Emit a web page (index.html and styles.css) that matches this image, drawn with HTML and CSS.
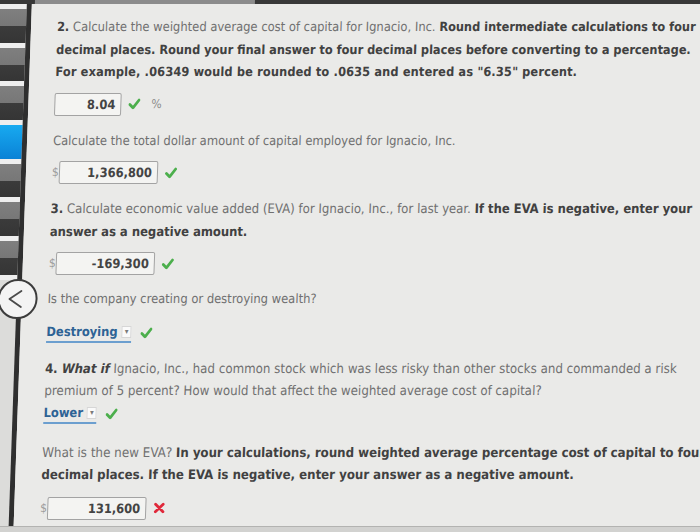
FILE: index.html
```html
<!DOCTYPE html>
<html lang="en">
<head>
<meta charset="utf-8">
<title>EVA question</title>
<link rel="stylesheet" href="styles.css">
</head>
<body>
<div class="screen">
  <div class="topbar"><span class="tab"></span></div>
  <div class="main">
    <aside class="rail">
      <div class="tile"></div>
      <div class="tile"></div>
      <div class="tile"></div>
      <div class="tile blue"></div>
      <div class="tile"></div>
      <div class="tile"></div>
      <div class="tile"></div>
      <div class="tile-end"></div>
    </aside>
    <div class="divider"></div>
    <section class="panel">
      <p class="q first"><b>2.</b> Calculate the weighted average cost of capital for Ignacio, Inc. <b>Round intermediate calculations to four<br>decimal places. Round your final answer to four decimal places before converting to a percentage.<br><span class="wide">For example, .06349 would be rounded to .0635 and entered as "6.35" percent.</span></b></p>
      <div class="answer">
        <span class="field w-pct">8.04</span>
        <svg class="mark" viewBox="0 0 12 12"><path class="check" d="M1.5 6.6 L4.7 9.8 L10.6 2"/></svg>
        <span class="unit">%</span>
      </div>

      <p class="q">Calculate the total dollar amount of capital employed for Ignacio, Inc.</p>
      <div class="answer">
        <span class="cur">$</span><span class="field w-amt">1,366,800</span>
        <svg class="mark" viewBox="0 0 12 12"><path class="check" d="M1.5 6.6 L4.7 9.8 L10.6 2"/></svg>
      </div>

      <p class="q q-eva"><b>3.</b> Calculate economic value added (EVA) for Ignacio, Inc., for last year. <b>If the EVA is negative, enter your<br>answer as a negative amount.</b></p>
      <div class="answer">
        <span class="cur">$</span><span class="field w-amt">-169,300</span>
        <svg class="mark" viewBox="0 0 12 12"><path class="check" d="M1.5 6.6 L4.7 9.8 L10.6 2"/></svg>
      </div>

      <p class="q q-short">Is the company creating or destroying wealth?</p>
      <div class="pick">
        <span class="select">Destroying<span class="caret">&#9662;</span></span>
        <svg class="mark" viewBox="0 0 12 12"><path class="check" d="M1.5 6.6 L4.7 9.8 L10.6 2"/></svg>
      </div>

      <p class="q q-after-pick"><b>4. <i>What if</i></b> Ignacio, Inc., had common stock which was less risky than other stocks and commanded a risk<br>premium of 5 percent? How would that affect the weighted average cost of capital?</p>
      <div class="pick tight">
        <span class="select">Lower<span class="caret">&#9662;</span></span>
        <svg class="mark" viewBox="0 0 12 12"><path class="check" d="M1.5 6.6 L4.7 9.8 L10.6 2"/></svg>
      </div>

      <p class="q q-loose">What is the new EVA? <b>In your calculations, round weighted average percentage cost of capital to four<br>decimal places. If the EVA is negative, enter your answer as a negative amount.</b></p>
      <div class="answer last">
        <span class="cur">$</span><span class="field w-amt">131,600</span>
        <svg class="mark cross" viewBox="0 0 12 12"><path class="x" d="M2.2 2.2 L9.8 9.8 M9.8 2.2 L2.2 9.8"/></svg>
      </div>
    </section>
  </div>
  <div class="footer"></div>
  <button class="back" type="button" aria-label="Back">
    <svg viewBox="0 0 40 40"><polyline points="24,11 11,20 24,29"/></svg>
  </button>
</div>
</body>
</html>
```

FILE: styles.css
```css
html, body {
  margin: 0;
  padding: 0;
}
body {
  width: 700px;
  height: 532px;
  overflow: hidden;
  background: #e9e9e7;
  font-family: "DejaVu Sans Condensed", "DejaVu Sans", sans-serif;
}
.screen {
  position: relative;
  width: 740px;
  height: 545px;
  display: flex;
  flex-direction: column;
  transform: skewX(-2deg);
  transform-origin: 0 0;
}
.topbar {
  flex: none;
  height: 4px;
  background: #383838;
  padding-left: 35px;
}
.tab {
  display: block;
  width: 220px;
  height: 4px;
  background: #8c8c8c;
}
.main {
  flex: none;
  height: 522px;
  display: flex;
}
.rail {
  flex: none;
  width: 27px;
  background: #dcdcda;
  display: flex;
  flex-direction: column;
}
.tile {
  flex: none;
  height: 38.7px;
  box-sizing: border-box;
  border-top: 5px solid #eeeeee;
  background: linear-gradient(#7f7f7f 0, #777 17px, #3b3b3b 17px, #353535 100%);
}
.tile.blue {
  background: linear-gradient(#18aaf0, #0a82d6);
}
.tile-end {
  flex: none;
  height: 5px;
  background: #eeeeee;
}
.divider {
  flex: none;
  width: 5px;
  background: #2f2f2f;
}
.panel {
  flex: 1;
  padding: 12px 0 0 26px;
  background: #eaeae8;
  color: #707070;
  font-size: 12.85px;
  line-height: 22.5px;
}
.footer {
  flex: 1;
  background: #d2d2d0;
  border-top: 1px solid #b3b3b1;
}
.q {
  margin: 14px 0 0;
  white-space: nowrap;
}
.q.first { margin-top: 0; }
.q.q-eva { font-size: 13.1px; }
.q.q-short { margin-top: 13px; }
.q.q-after-pick { margin-top: 15px; font-size: 13.2px; }
.q.q-loose { margin-top: 18px; font-size: 13.3px; }
.q b { color: #414141; font-size: 0.985em; }
.q i { font-style: italic; }
.q .wide { letter-spacing: 0.15px; }

.answer {
  display: flex;
  align-items: center;
  height: 23px;
  margin-top: 9px;
}
.answer.last { margin-top: 10px; }
.cur {
  width: 7px;
  color: #9a9a9a;
  font-size: 12px;
}
.field {
  box-sizing: border-box;
  height: 23px;
  line-height: 21px;
  padding-right: 5px;
  text-align: right;
  background: #f4f4f2;
  border: 1px solid #a3a3a3;
  border-radius: 2px;
  color: #444444;
  font-weight: bold;
  font-size: 12.8px;
}
.w-pct { width: 67px; }
.w-amt { width: 99px; }
.mark {
  width: 12px;
  height: 12px;
  margin-left: 7px;
  flex: none;
}
.check {
  fill: none;
  stroke: #4caf4c;
  stroke-width: 2.8;
  stroke-linecap: round;
  stroke-linejoin: round;
}
.x {
  fill: none;
  stroke: #e0283a;
  stroke-width: 2.8;
  stroke-linecap: round;
}
.unit {
  margin-left: 11px;
  color: #8a8a8a;
  font-size: 12px;
}
.pick {
  display: flex;
  align-items: center;
  height: 20px;
  margin-top: 12px;
}
.pick.tight { margin-top: 1px; }
.select {
  display: inline-flex;
  align-items: center;
  height: 18px;
  border-bottom: 2px solid #6c9fcf;
  color: #2e6395;
  font-weight: bold;
  font-size: 12.8px;
  line-height: 16px;
}
.caret {
  display: inline-flex;
  align-items: center;
  justify-content: center;
  width: 8px;
  height: 10px;
  margin-left: 4px;
  background: #fafafa;
  border: 1px solid #d6d6d6;
  color: #7a7a7a;
  font-size: 8px;
  line-height: 10px;
  font-weight: normal;
}
.pick .mark { margin-left: 9px; }

.back {
  position: absolute;
  left: 8px;
  top: 279px;
  width: 40px;
  height: 40px;
  padding: 0;
  box-sizing: border-box;
  border: 2px solid #3c3c3c;
  border-radius: 50%;
  background: #f3f3f3;
}
.back svg {
  display: block;
  width: 36px;
  height: 36px;
}
.back polyline {
  fill: none;
  stroke: #4a4a4a;
  stroke-width: 2;
  stroke-linecap: round;
  stroke-linejoin: round;
}
```
